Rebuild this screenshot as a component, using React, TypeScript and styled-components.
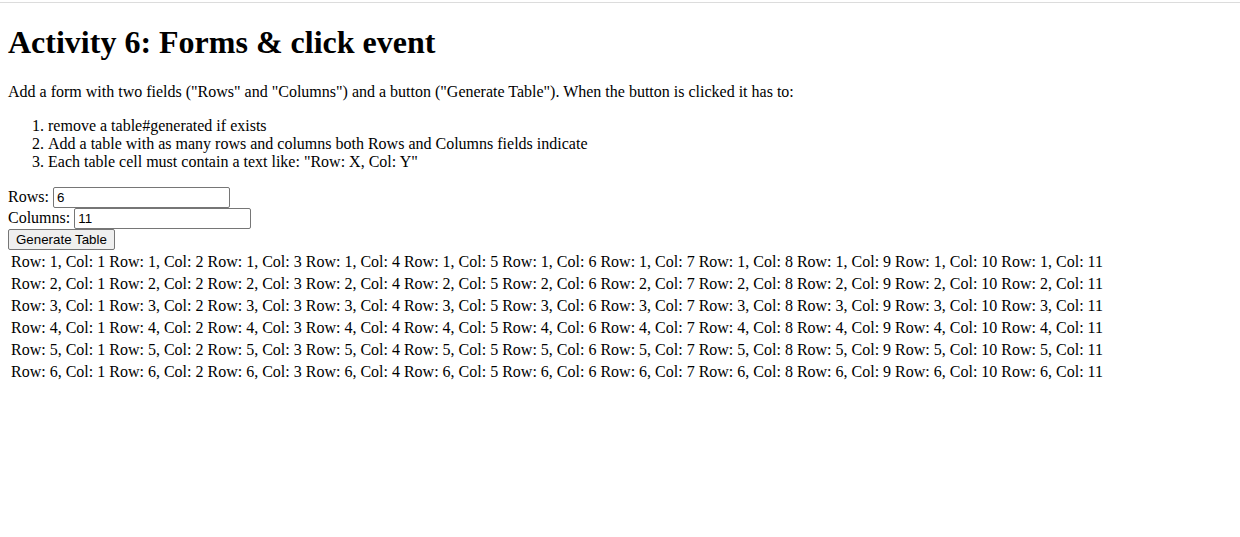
import React, { useState } from "react";
import styled, { createGlobalStyle } from "styled-components";

const GlobalStyle = createGlobalStyle`
  html, body { margin: 0; padding: 0; background: #fff; }
  body { font-family: "Liberation Serif", "Times New Roman", serif; font-size: 16px; color: #000; }
`;

const TopRule = styled.div`
  margin-top: 2px;
  height: 1px;
  background: #dcdcdc;
`;

const Page = styled.main`
  padding: 0 8px 8px;
`;

const Title = styled.h1`
  font-size: 32px;
  font-weight: bold;
  margin: 21.44px 0;
`;

const Para = styled.p`
  margin: 16px 0;
`;

const Steps = styled.ol`
  margin: 16px 0;
  padding-left: 40px;
`;

const Form = styled.form`
  margin: 0;
`;

const Field = styled.div`
  display: flex;
  align-items: center;
  height: 21px;
`;

const Label = styled.label`
  margin-right: 4px;
`;

const TextInput = styled.input`
  font-family: "Liberation Sans", Arial, sans-serif;
  font-size: 13.333px;
  width: 177px;
  height: 21px;
  box-sizing: border-box;
  padding: 1px 3px;
  border: 1px solid #767676;
  border-radius: 2px;
  color: #000;
  outline: none;
`;

const Button = styled.button`
  font-family: "Liberation Sans", Arial, sans-serif;
  font-size: 13.333px;
  padding: 1px 7px;
  height: 21px;
  border: 1px solid #767676;
  border-radius: 2px;
  background: #efefef;
  color: #000;
`;

const Table = styled.table`
  border-spacing: 2px;
  border-collapse: separate;
`;

const Cell = styled.td`
  padding: 1px;
  white-space: nowrap;
`;

export default function App() {
  const [rows, setRows] = useState("6");
  const [cols, setCols] = useState("11");
  const r = parseInt(rows, 10) || 0;
  const c = parseInt(cols, 10) || 0;
  return (
    <>
      <GlobalStyle />
      <TopRule />
      <Page>
        <Title>Activity 6: Forms &amp; click event</Title>
        <Para>
          Add a form with two fields ("Rows" and "Columns") and a button ("Generate Table"). When the button is clicked it has to:
        </Para>
        <Steps>
          <li>remove a table#generated if exists</li>
          <li>Add a table with as many rows and columns both Rows and Columns fields indicate</li>
          <li>Each table cell must contain a text like: "Row: X, Col: Y"</li>
        </Steps>
        <Form onSubmit={(e) => e.preventDefault()}>
          <Field>
            <Label htmlFor="rows">Rows:</Label>
            <TextInput id="rows" value={rows} onChange={(e) => setRows(e.target.value)} />
          </Field>
          <Field>
            <Label htmlFor="cols">Columns:</Label>
            <TextInput id="cols" value={cols} onChange={(e) => setCols(e.target.value)} />
          </Field>
          <Field>
            <Button type="button">Generate Table</Button>
          </Field>
        </Form>
        <Table id="generated">
          <tbody>
            {Array.from({ length: r }, (_, i) => (
              <tr key={i}>
                {Array.from({ length: c }, (_, j) => (
                  <Cell key={j}>Row: {i + 1}, Col: {j + 1}</Cell>
                ))}
              </tr>
            ))}
          </tbody>
        </Table>
      </Page>
    </>
  );
}
